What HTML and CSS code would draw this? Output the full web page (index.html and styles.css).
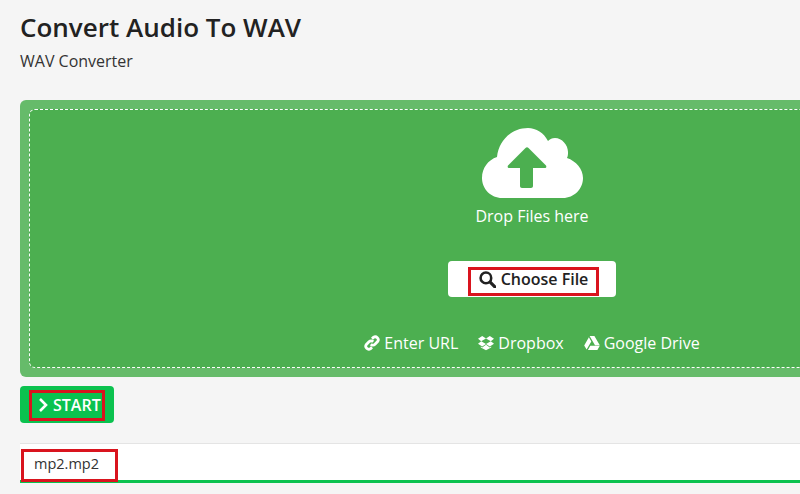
FILE: index.html
```html
<!DOCTYPE html>
<html lang="en">
<head>
    <meta charset="UTF-8">
    <title>Convert Audio To WAV</title>
    <link rel="stylesheet" href="styles.css">
</head>
<body>

    <h1 class="title">Convert Audio To WAV</h1>
    <p class="subtitle">WAV Converter</p>

    <!-- Upload Panel -->
    <div class="panel">
        <div class="dropzone">
            <svg class="cloud" viewBox="0 0 101 70">
                <path fill="#fff" d="M20 70C9 70 0 61 0 50 0 40 6 32 15 29 17 12 30 0 46 0 54 0 62 5 66 13 68 11 70 10 73 10 80 10 86 17 86 24 86 26 86 28 85 30 94 33 101 41 101 50 101 61 92 70 81 70z"/>
                <path fill="#4caf50" d="M43.500 20c1-1 2-1 3 0L63.500 37c1.500 1.500 1 3-1 3H51V58c0 1.200-.8 2-2 2H40c-1.200 0-2-.8-2-2V40H27.500c-2 0-2.500-1.500-1-3z"/>
            </svg>
            <div class="drop-text">Drop Files here</div>

            <button class="choose-btn">
                <span class="marked choose-inner">
                    <svg class="icon-search" viewBox="0 0 16 16">
                        <circle cx="6.5" cy="6.500" r="5" fill="none" stroke="#222" stroke-width="2.4"/>
                        <path d="M10.500 10.500L15 15" stroke="#222" stroke-width="3" stroke-linecap="round"/>
                    </svg>
                    Choose File
                </span>
            </button>

            <div class="sources">
                <span class="source">
                    <svg class="icon" viewBox="0 0 16 16">
                        <path fill="none" stroke="#fff" stroke-width="2.800" d="M6.800 9.200a3 3 0 0 0 4.200 0l2.600-2.600a3 3 0 0 0-4.200-4.200L8 3.800M9.200 6.800a3 3 0 0 0-4.200 0L2.400 9.400a3 3 0 0 0 4.200 4.200L8 12.200"/>
                    </svg>
                    Enter URL
                </span>
                <span class="source">
                    <svg class="icon" viewBox="0 0 16 16">
                        <path fill="#fff" d="M4.200 1L0 3.800l3.200 2.500L8 3.500zM11.800 1L8 3.500l4.800 2.800L16 3.800zM0 8.800l4.200 2.800L8 9 3.200 6.300zM16 8.800l-3.200-2.500L8 9l3.800 2.600zM8 9.800l-3.800 2.600-1.400-.9v1.100L8 15.200l5.200-2.600v-1.100l-1.400.9z"/>
                    </svg>
                    Dropbox
                </span>
                <span class="source">
                    <svg class="icon" viewBox="0 0 16 16">
                        <path fill="#fff" d="M5.600 1h4.800l5.400 9.200h-4.800zM4.900 2.200L7.300 6.400 2.600 14.600 0.200 10.400zM3.900 15l2.400-4.200h9.500L13.400 15z"/>
                    </svg>
                    Google Drive
                </span>
            </div>
        </div>
    </div>

    <!-- Start Button -->
    <button class="start-btn">
        <span class="marked start-inner">
            <svg class="icon-chevron" viewBox="0 0 10 16">
                <path d="M2 2l6 6-6 6" fill="none" stroke="#fff" stroke-width="2.600"/>
            </svg>
            START
        </span>
    </button>

    <!-- File Row -->
    <div class="file-row">
        <span class="marked file-name">mp2.mp2</span>
    </div>

</body>
</html>
```

FILE: styles.css
```css
/* General Styles */
html, body {
    margin: 0;
    height: 494px;
    overflow: hidden;
}

body {
    width: 1024px;
    padding: 0 20px;
    background-color: #f5f5f5;
    font-family: "Open Sans", sans-serif;
    color: #222;
}

button {
    font-family: inherit;
    border: none;
    padding: 0;
}

/* Red annotation boxes */
.marked {
    box-sizing: border-box;
    border: 3px solid #d9141e;
}

/* Heading */
.title {
    margin: 0;
    padding-top: 11px;
    font-size: 26px;
    line-height: 33px;
    font-weight: 600;
}

.subtitle {
    margin: 7px 0 0;
    font-size: 16px;
    line-height: 20px;
    color: #333;
}

/* Upload Panel */
.panel {
    box-sizing: border-box;
    height: 277px;
    margin-top: 29px;
    padding: 9px;
    background-color: #66bb6a;
    border-radius: 6px;
}

.dropzone {
    box-sizing: border-box;
    height: 259px;
    padding-top: 18px;
    display: flex;
    flex-direction: column;
    align-items: center;
    background-color: #4caf50;
    border: 1px dashed #fff;
    border-radius: 6px;
    color: #fff;
}

.cloud {
    display: block;
    width: 101px;
    height: 70px;
}

.drop-text {
    margin-top: 8px;
    font-size: 16px;
    line-height: 20px;
}

.choose-btn {
    box-sizing: border-box;
    width: 168px;
    height: 36px;
    margin-top: 35px;
    padding: 6px 17px 1px 20px;
    background-color: #fff;
    border-radius: 4px;
    color: #222;
    font-size: 16px;
    font-weight: 600;
    display: flex;
}

.choose-inner {
    width: 131px;
    height: 29px;
    padding-bottom: 5px;
    display: flex;
    align-items: center;
    justify-content: center;
    gap: 5px;
}

.icon-search {
    width: 17px;
    height: 17px;
}

.sources {
    margin-top: 36px;
    display: flex;
    gap: 20px;
    font-size: 16px;
    line-height: 20px;
}

.source {
    display: flex;
    align-items: center;
    gap: 4px;
}

.icon {
    width: 16px;
    height: 16px;
}

/* Start Button */
.start-btn {
    box-sizing: border-box;
    display: flex;
    width: 94px;
    height: 37px;
    margin-top: 9px;
    padding: 4px 0 0 9px;
    background-color: #0bc24f;
    border-radius: 4px;
    color: #fff;
    font-size: 16px;
    font-weight: 600;
}

.start-inner {
    width: 76px;
    height: 31px;
    padding-left: 6px;
    padding-bottom: 2px;
    display: flex;
    align-items: center;
    gap: 5px;
}

.icon-chevron {
    width: 10px;
    height: 16px;
}

/* File Row */
.file-row {
    box-sizing: border-box;
    height: 40px;
    margin-top: 20px;
    padding: 5px 0 0 1px;
    background-color: #fff;
    border-top: 1px solid #e4e4e4;
    border-bottom: 3px solid #0bc24f;
}

.file-name {
    box-sizing: border-box;
    display: flex;
    align-items: center;
    width: 97px;
    height: 33px;
    padding-left: 10px;
    padding-bottom: 5px;
    font-size: 14.5px;
    color: #333;
}
```
